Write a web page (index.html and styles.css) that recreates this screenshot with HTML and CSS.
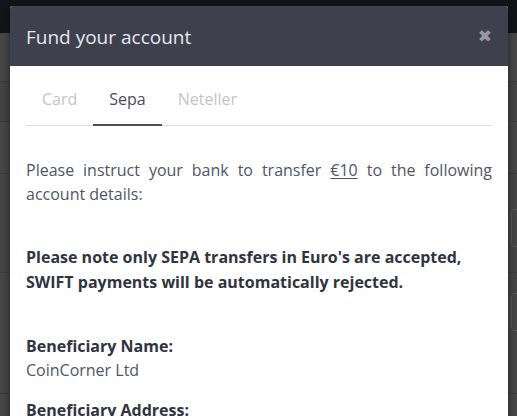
FILE: index.html
```html
<!DOCTYPE html>
<html>
<head>
<meta charset="utf-8">
<link rel="stylesheet" href="styles.css">
</head>
<body>
<div class="page">
  <div class="topbar"></div>
  <div class="row r1"></div>
  <div class="row r2"></div>
  <div class="row r3"></div>
  <div class="row r4">
    <div class="side-btn"></div>
    <div class="side-btn"></div>
  </div>
  <div class="row r5">
    <div class="side-btn"></div>
  </div>
</div>
<div class="modal">
  <div class="modal-header">
    <h4 class="modal-title">Fund your account</h4>
    <span class="close">&#x2716;</span>
  </div>
  <div class="modal-body">
    <ul class="tabs">
      <li class="tab">Card</li>
      <li class="tab active">Sepa</li>
      <li class="tab">Neteller</li>
    </ul>
    <p class="intro">Please instruct your bank to transfer <u>€10</u> to the following account details:</p>
    <p class="note">Please note only SEPA transfers in Euro's are accepted, SWIFT payments will be automatically rejected.</p>
    <div class="field">
      <div class="label">Beneficiary Name:</div>
      <div class="value">CoinCorner Ltd</div>
    </div>
    <div class="field">
      <div class="label">Beneficiary Address:</div>
      <div class="value">Isle of Man</div>
    </div>
  </div>
</div>
</body>
</html>
```
FILE: styles.css
```css
html, body {
  margin: 0;
  padding: 0;
  height: 100%;
  overflow: hidden;
}
body {
  background: #474747;
  font-family: "Open Sans", "Noto Sans", sans-serif;
}
.page {
  display: flex;
  flex-direction: column;
}
.topbar {
  height: 33px;
  background: #121418;
}
.row {
  border-bottom: 1px solid #3b3b3b;
  position: relative;
}
.r1 { height: 48px; background: #474747; }
.r2 { height: 39px; background: #444444; }
.r3 { height: 51px; background: #464646; }
.r4 { height: 98px; background: #454545; }
.r5 { height: 120px; background: #464646; }
.side-btn {
  position: absolute;
  left: 511px;
  width: 20px;
  height: 36px;
  border: 1px solid #5a5a5a;
  border-radius: 4px;
}
.r4 .side-btn:first-child { top: 35px; }
.r4 .side-btn:nth-child(2) { top: 110px; }
.r5 .side-btn { top: 20px; }

.modal {
  position: absolute;
  left: 10px;
  top: 6px;
  width: 498px;
  height: 430px;
  background: #ffffff;
  border-radius: 3px 3px 0 0;
  box-shadow: 0 3px 9px rgba(0,0,0,0.5);
  overflow: hidden;
}
.modal-header {
  height: 60px;
  background: #3e404d;
  display: flex;
  align-items: center;
  justify-content: space-between;
  padding: 0 16px;
}
.modal-title {
  margin: 0;
  font-weight: 400;
  font-size: 19px;
  color: #e4e8ef;
  letter-spacing: 0;
  position: relative;
  top: 1px;
}
.close {
  font-size: 17px;
  color: #9698a6;
  font-family: "DejaVu Sans", sans-serif;
  position: relative;
  top: 0;
  right: 0;
}
.modal-body {
  padding: 16px 16px 0;
}
.tabs {
  list-style: none;
  margin: 0;
  padding: 0;
  display: flex;
  border-bottom: 1px solid #dddddd;
}
.tab {
  padding: 6px 16px 14px;
  font-size: 16px;
  line-height: 22px;
  color: #c4c4c6;
  border-bottom: 2px solid transparent;
  margin-bottom: -1px;
}
.tab.active {
  color: #4b4d5a;
  border-bottom-color: #4b4d5c;
}
p, .field {
  margin: 0;
  font-size: 16px;
  line-height: 24px;
  color: #4f5566;
}
.intro {
  margin-top: 32px;
  text-align: justify;
}
.intro u {
  text-underline-offset: 2px;
}
.note {
  margin-top: 39px;
  font-weight: 700;
  color: #30343f;
  line-height: 25px;
}
.field {
  margin-top: 39px;
}
.field + .field {
  margin-top: 16px;
}
.label {
  font-weight: 700;
  color: #30343f;
}
```
